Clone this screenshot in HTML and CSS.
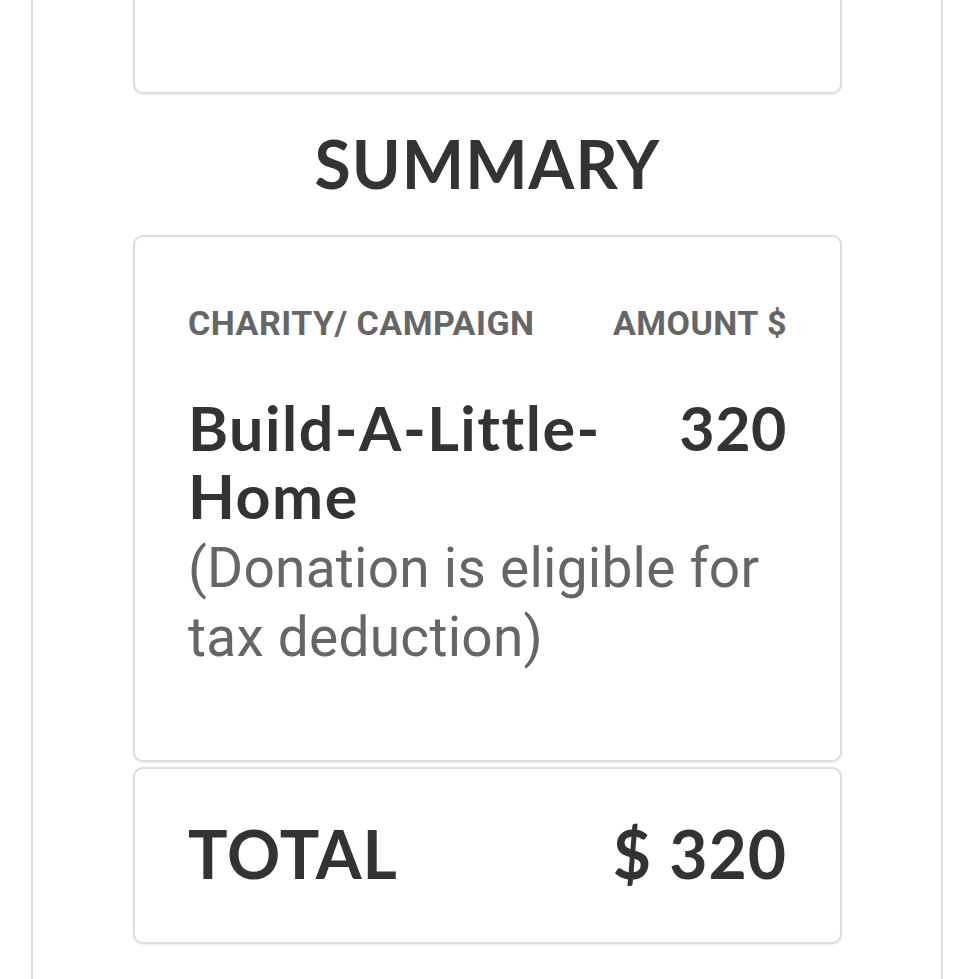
FILE: index.html
```html
<!DOCTYPE html>
<html lang="en">
<head>
<meta charset="UTF-8" />
<meta name="viewport" content="width=device-width,initial-scale=1.0" />
<title>Donation Summary</title>
<link rel="stylesheet" href="styles.css">
</head>
<body>
  <div class="page">
    <div class="card prev"></div>

    <h2 class="title">SUMMARY</h2>

    <div class="card summary">
      <div class="grid">
        <div class="th">CHARITY/ CAMPAIGN</div>
        <div class="th right">AMOUNT $</div>
        <div class="name">Build-A-Little-Home</div>
        <div class="amount">320</div>
        <div class="note">(Donation is eligible for tax deduction)</div>
      </div>
    </div>

    <div class="card total">
      <div class="total-label">TOTAL</div>
      <div class="total-value">$ 320</div>
    </div>
  </div>
</body>
</html>
```

FILE: styles.css
```css
body { margin:0; background:#fff; color:#333; font-family: Roboto, "Liberation Sans", Arial, sans-serif; }
.page { margin:0 37px 0 31px; min-height:100vh; border-left:2px solid #ddd; border-right:2px solid #ddd; padding:0 99px 0 100px; box-sizing:border-box; }
.card { border:2px solid #ddd; border-radius:10px; background:#fff; box-shadow:0 1px 2px rgba(0,0,0,.08); }
.prev { height:94px; border-top:0; border-radius:0 0 10px 10px; box-sizing:border-box; }
.title { margin:30px 0 31px; text-align:center; font-family: Lato, "Open Sans", sans-serif; font-weight:700; font-size:66px; line-height:80px; letter-spacing:1px; color:#333; }
.summary { padding:66px 53px 88px; }
.grid { display:grid; grid-template-columns:1fr auto; column-gap:8px; }
.th { font-weight:700; font-size:34px; line-height:40px; letter-spacing:.5px; color:#666; }
.right { text-align:right; }
.name, .amount { margin-top:51px; font-family: Lato, "Open Sans", sans-serif; font-weight:700; font-size:61px; line-height:68px; color:#333; }
.name { letter-spacing:1.5px; }
.amount { text-align:right; letter-spacing:.5px; }
.note { grid-column:1 / -1; margin-top:4px; font-size:55px; line-height:69px; letter-spacing:.25px; color:#666; }
.total { margin-top:5px; padding:45px 53px 48px; display:flex; justify-content:space-between; font-family: Lato, "Open Sans", sans-serif; font-weight:700; font-size:66px; line-height:80px; letter-spacing:1px; color:#333; }
```
